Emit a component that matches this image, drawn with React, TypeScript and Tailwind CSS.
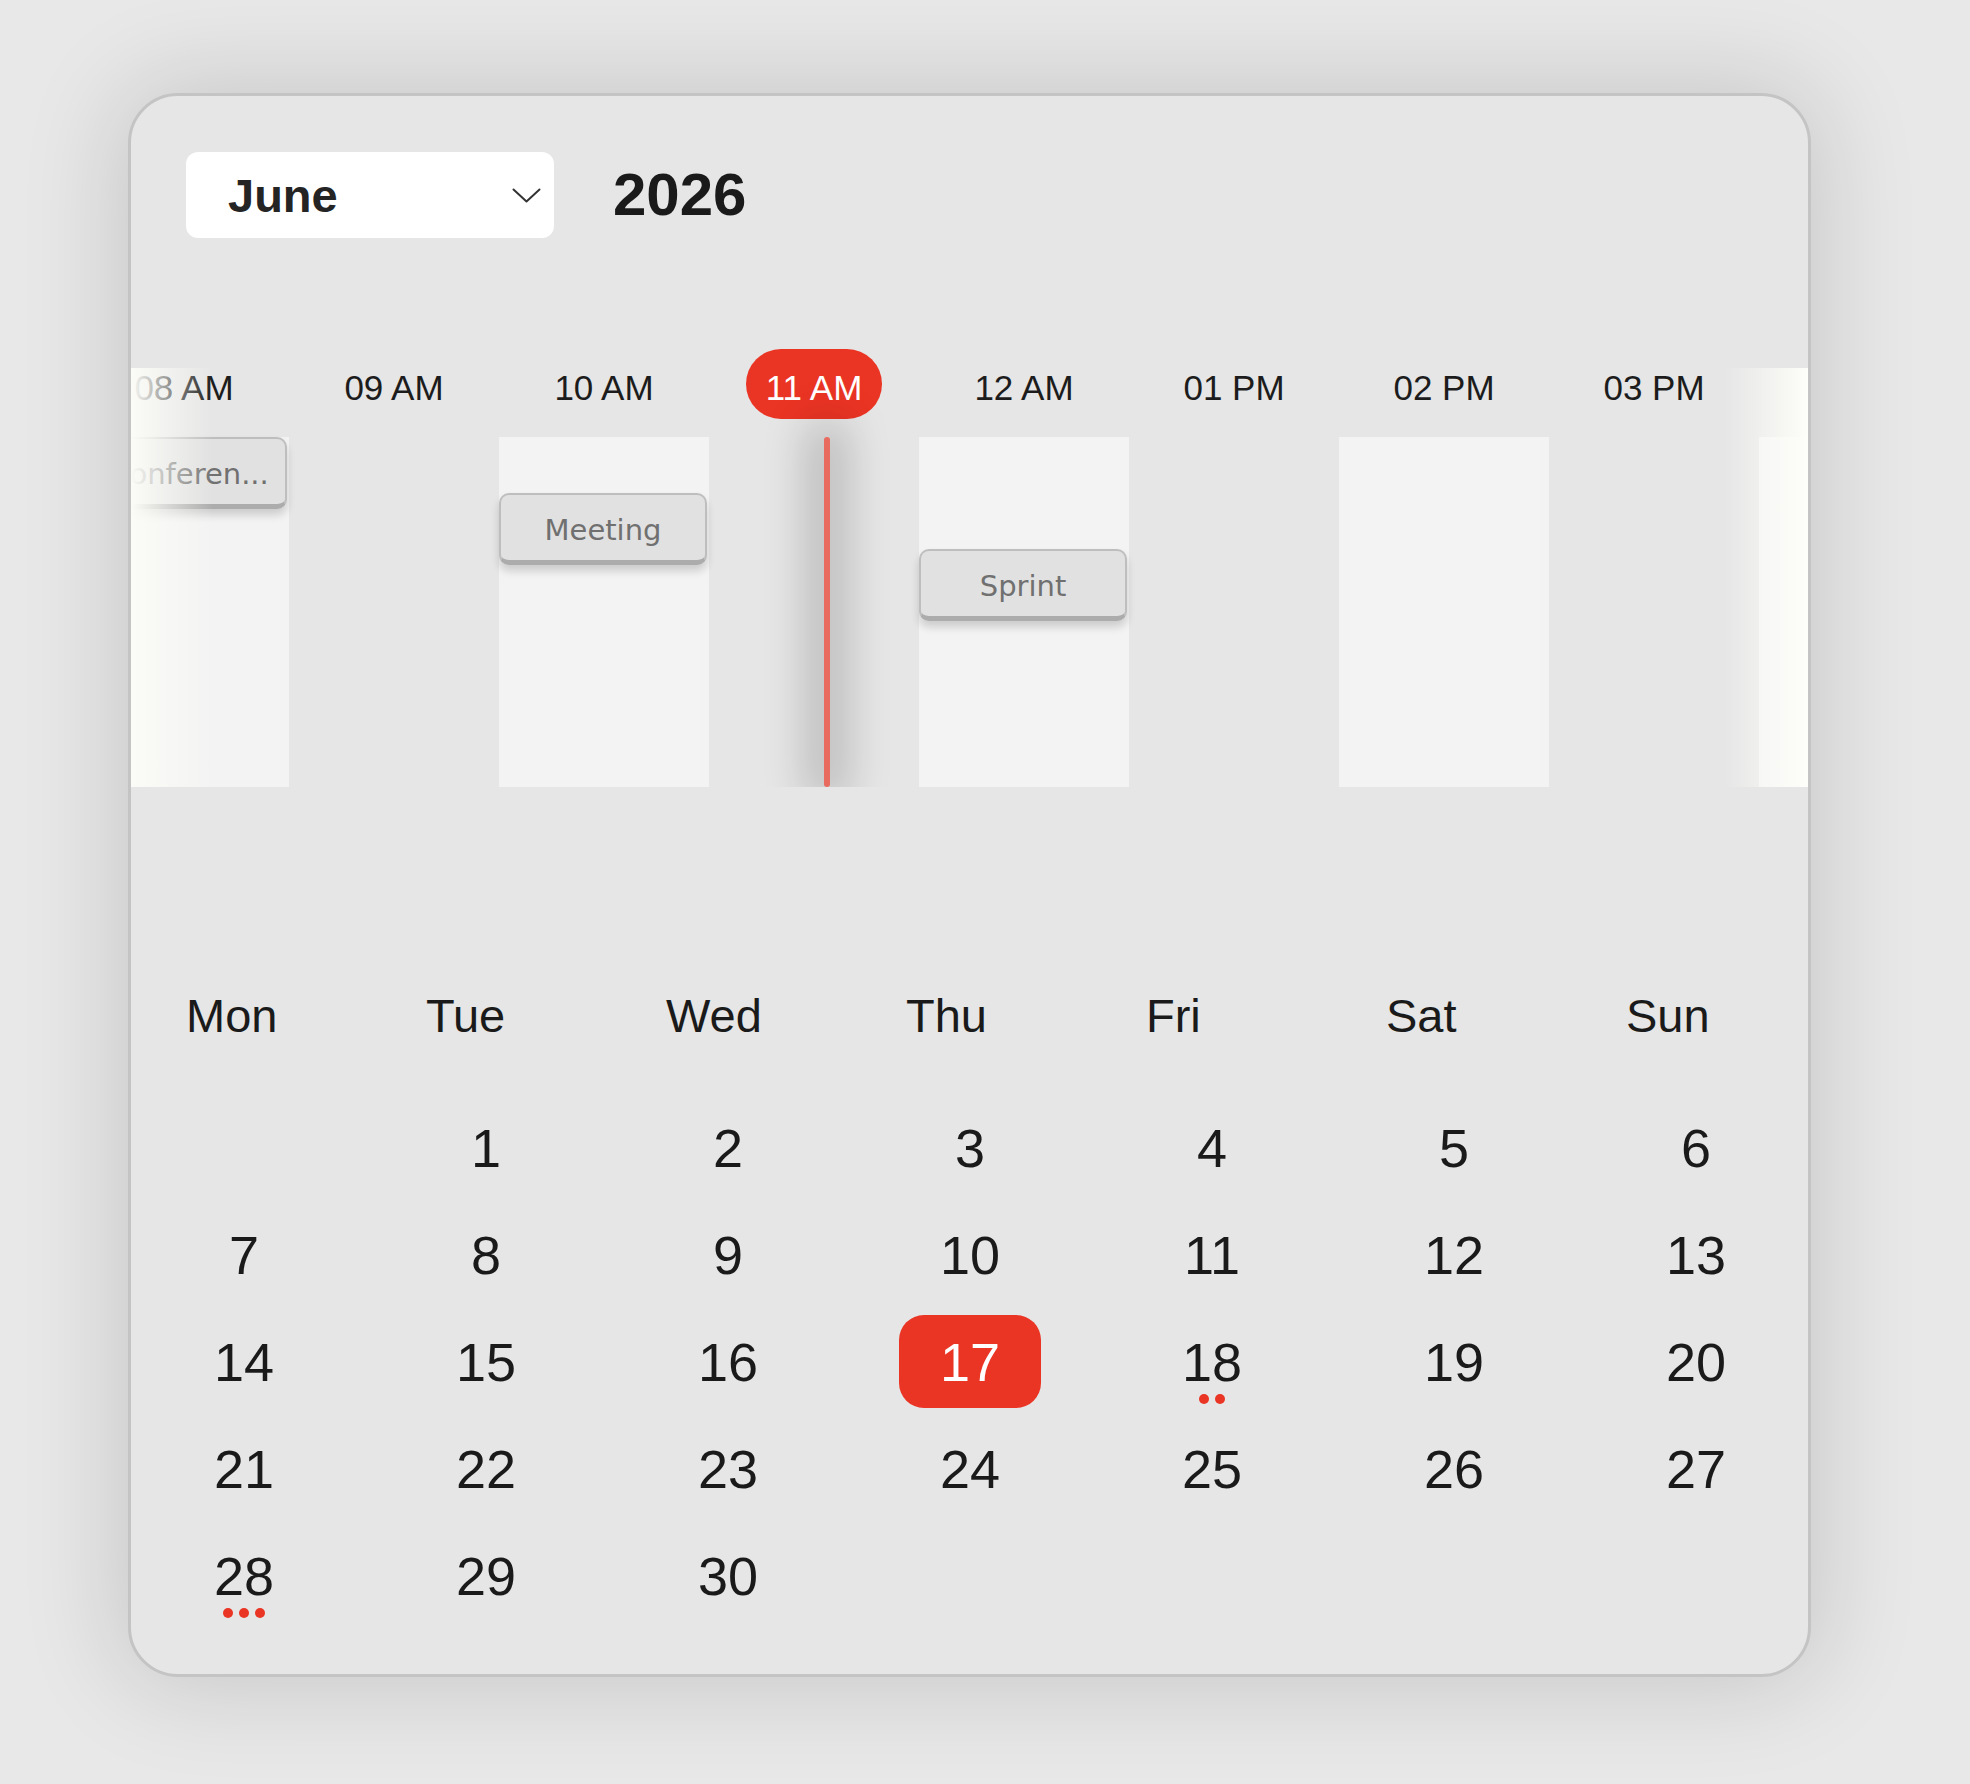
import React from 'react';

const hours = ['08 AM', '09 AM', '10 AM', '11 AM', '12 AM', '01 PM', '02 PM', '03 PM', ''];
const weekdays = ['Mon', 'Tue', 'Wed', 'Thu', 'Fri', 'Sat', 'Sun'];

type Ev = { col: number; top: string; label: string; pad: string };
const events: Ev[] = [
  { col: 0, top: 'top-0', label: 'Conferen...', pad: 'pl-[12px]' },
  { col: 2, top: 'top-[56px]', label: 'Meeting', pad: 'pl-0' },
  { col: 4, top: 'top-[112px]', label: 'Sprint', pad: 'pl-0' },
];

const dots: Record<number, number> = { 18: 2, 28: 3 };

function Chevron() {
  return (
    <svg width="29" height="15" viewBox="0 0 29 15" aria-hidden="true">
      <polyline points="1.5,1.5 14.5,13.5 27.5,1.5" fill="none" stroke="#333333" strokeWidth="2" strokeLinecap="round" strokeLinejoin="round" />
    </svg>
  );
}

export default function App() {
  const cells: (number | null)[] = [null];
  for (let d = 1; d <= 30; d++) cells.push(d);

  return (
    <div className="min-h-[1784px] w-[1970px] bg-[#e8e8e8] pt-[93px] pl-[128px] font-['Liberation_Sans',Arial,sans-serif]">
      <div className="w-[1683px] h-[1584px] rounded-[50px] border-[3px] border-[#c4c4c4] bg-[#e6e6e6] shadow-[0_0_100px_10px_rgba(0,0,0,0.14)] flex flex-col overflow-hidden">
        {/* Header */}
        <div className="mt-[56px] ml-[55px] flex items-center h-[86px]">
          <div className="w-[368px] h-[86px] bg-white rounded-[12px] flex items-center justify-between pl-[42px] pr-[13px]">
            <span className="text-[47px] font-bold text-[#242424] leading-none">June</span>
            <Chevron />
          </div>
          <span className="ml-[59px] text-[60px] font-bold text-[#1a1a1a] leading-none">2026</span>
        </div>

        {/* Timeline */}
        <div className="relative mt-[111px] h-[438px] overflow-hidden">
          <div className="ml-[-52px] flex flex-col w-[1890px]">
            <div className="flex h-[70px]">
              {hours.map((h, i) => (
                <div key={`l${i}`} className="w-[210px] shrink-0 flex items-center justify-center">
                  {i === 3 ? (
                    <span className="h-[70px] px-[20px] rounded-full bg-[#ea3424] text-white text-[35px] leading-none flex items-center pt-[6px]">
                      {h}
                    </span>
                  ) : h ? (
                    <span className="text-[35px] leading-none text-[#1c1c1c] pt-[6px]">{h}</span>
                  ) : null}
                </div>
              ))}
            </div>
            <div className="relative mt-[18px] flex h-[350px]">
              {hours.map((h, i) => (
                <div key={`c${i}`} className={i % 2 === 0 ? 'relative w-[210px] shrink-0 h-full bg-[#f3f3f3]' : 'relative w-[210px] shrink-0 h-full'}>
                  {events
                    .filter((e) => e.col === i)
                    .map((e) => (
                      <div
                        key={e.label}
                        className={`absolute left-0 ${e.top} ${e.pad} w-[208px] h-[72px] rounded-[10px] border-2 border-b-[5px] border-[#bebebe] border-b-[#acacac] bg-[#e1e1e1] shadow-[0_6px_8px_rgba(0,0,0,0.16)] flex items-center justify-center whitespace-nowrap overflow-hidden text-[29px] leading-none text-[#707070] font-['DejaVu_Sans',sans-serif]`}
                      >
                        <span className="pt-[6px]">{e.label}</span>
                      </div>
                    ))}
                </div>
              ))}
              <div className="absolute left-[745px] top-0 w-[6px] h-full rounded-full bg-[#e96b60] shadow-[0_0_44px_16px_rgba(0,0,0,0.21)]" />
            </div>
          </div>
          <div className="absolute left-0 top-[19px] bottom-0 w-[82px] bg-linear-to-r from-[#fbfbf7] to-[#fbfbf700]" />
          <div className="absolute right-0 top-[19px] bottom-0 w-[83px] bg-linear-to-l from-[#fdfdf9] to-[#fdfdf900]" />
        </div>

        {/* Weekday header */}
        <div className="mt-[201px] ml-[55px] grid grid-cols-[repeat(7,127px)] gap-x-[113px] h-[56px] items-center">
          {weekdays.map((w) => (
            <span key={w} className="text-[47px] leading-[56px] text-[#1a1a1a]">
              {w}
            </span>
          ))}
        </div>

        {/* Dates */}
        <div className="mt-[57px] ml-[42px] grid grid-cols-[repeat(7,142px)] auto-rows-[93px] gap-x-[100px] gap-y-[14px]">
          {cells.map((d, idx) => {
            if (d === null) return <div key={`e${idx}`} />;
            const today = d === 17;
            return (
              <div
                key={d}
                className={
                  today
                    ? 'relative flex items-center justify-center rounded-[25px] bg-[#ea3424] text-white text-[54px] leading-none'
                    : 'relative flex items-center justify-center text-[#1a1a1a] text-[54px] leading-none'
                }
              >
                <span>{d}</span>
                {dots[d] ? (
                  <div className="absolute top-[79px] left-0 right-0 flex justify-center gap-[6px]">
                    {Array.from({ length: dots[d] }).map((_, k) => (
                      <span key={k} className="w-[10px] h-[10px] rounded-full bg-[#ea3424]" />
                    ))}
                  </div>
                ) : null}
              </div>
            );
          })}
        </div>
      </div>
    </div>
  );
}
